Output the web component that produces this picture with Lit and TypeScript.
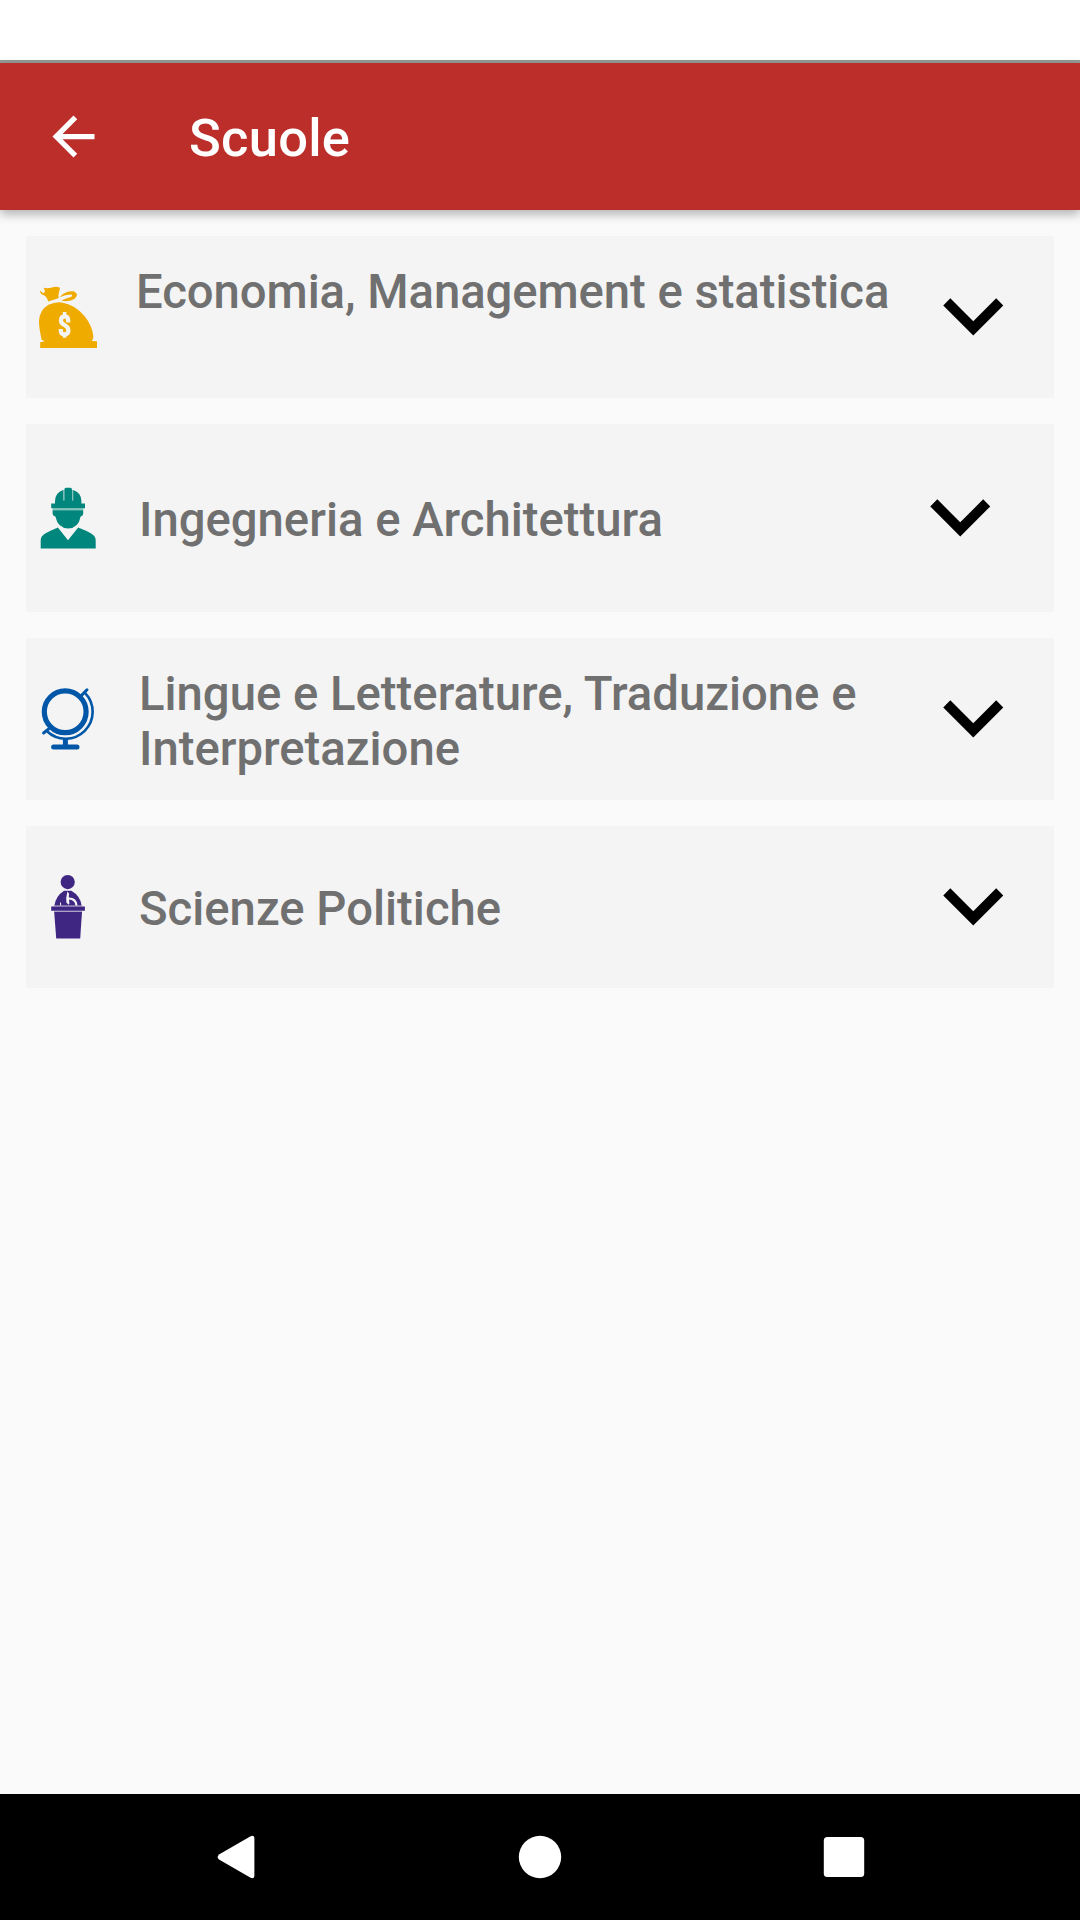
import { LitElement, html, css, svg } from "lit";
import { customElement } from "lit/decorators.js";

const moneyBag = svg`
  <g fill="#f0ab00">
    <path d="M19.7 20.6 L23.4 23.2 L25 21.6 L23.8 17.8 Q28 18.9 32 17.5 Q36 16 40 17.7 L38.4 25.6 Q39 27.6 38.4 28.2 L28.3 31.6 Q26.6 26.2 23.8 25.2 Q20.4 24.6 19.7 20.6Z"/>
    <path d="M39.6 27.2 Q45 20.8 53.5 21.3 Q59.8 24 54.8 28.8 Q49.5 32.4 41.2 30.6 Q46 28.6 51.4 26.8 Q53.6 24.8 50.5 24.6 Q45.5 25 39.6 27.2Z"/>
    <path d="M28.5 34.8 Q35 31.6 42 32.4 Q55 34.6 64.5 46 Q72.5 56 73.4 66.6 Q73.2 69.6 71.8 71 L77 71.2 V78 H20.2 V72.2 L24.8 71.2 L21.6 69.8 Q19 58 19 51 Q19.6 39.8 28.5 34.8Z"/>
  </g>
  <g fill="none" stroke="#f4f4f4">
    <path stroke-width="4.2" d="M48.2 52.4 V50.4 Q48.2 46.4 44.6 46.4 Q41 46.4 41 50.4 Q41 53.4 44.6 55.2 Q48.4 57.2 48.4 60.6 Q48.4 64.4 44.6 64.4 Q40.8 64.4 40.8 60.8 V59"/>
    <path stroke-width="3.6" d="M44.6 42 V46 M44.6 64.6 V67.8"/>
  </g>`;

const engineer = svg`
  <g fill="#00867c">
    <path d="M44.4 19.4 Q44.4 17.7 46 17.7 H50.4 Q52 17.7 52 19.4 V30.6 H53.2 V20 Q61.4 22.8 61.4 31 V33.6 H65 V38.3 H31.2 V33.6 H35 V31 Q35 22.8 43.2 20 V30.6 H44.4Z"/>
    <path d="M32.6 40.2 H63.2 V43.8 Q62.8 46.4 60.6 46.4 Q58.6 58 48.2 58.4 Q37.8 58 35.4 46.4 Q33 46.4 32.6 43.8Z"/>
    <path d="M37.9 57.6 L48 70.2 L58.2 57.6 Q66 60.6 71.2 63.6 Q75.7 66.2 75.7 70.4 V78.5 H20.7 V70.4 Q20.7 66.2 25.2 63.6 Q30.6 60.6 37.9 57.6Z"/>
    <path opacity="0.45" d="M32.6 38.3 H63.4 V40.2 H32.6Z M43.2 20 H44.4 V30.6 H43.2Z M52 20 H53.2 V30.6 H52Z"/>
  </g>`;

const globe = svg`
  <g fill="none" stroke="#0057a8">
    <circle cx="45.2" cy="41.8" r="20.9" stroke-width="5.2"/>
    <path stroke-width="2.6" d="M65.2 23.1 A27.02 27.02 0 0 1 27 61.3"/>
    <path stroke-width="3" stroke-linecap="round" d="M60.6 26.4 L67 19.8 M23.6 63 L29.6 58.2"/>
    <path stroke-width="5" d="M45.4 69 V76"/>
    <path stroke-width="5" stroke-linecap="round" d="M33.6 77.1 H57"/>
  </g>`;

const speaker = svg`
  <g fill="#3f2682">
    <circle cx="47.7" cy="22.1" r="7.1"/>
    <path d="M44 30.8 H51.4 Q60.4 36 61.6 45.6 H34.4 Q35.8 36 44 30.8Z"/>
    <path d="M31.2 46.4 H64.9 V50.8 H31.2Z"/>
    <path d="M34.2 52 H62 L60.2 78.6 H36.2Z"/>
    <path opacity="0.4" d="M33.5 45.5 H62.5 V46.5 H33.5Z M34 50.7 H62 V52.1 H34Z"/>
  </g>
  <g fill="#f4f4f4">
    <path d="M47.4 31.6 L49 33.4 L48.8 37.6 Q56.8 37.4 57.6 45.6 H55.4 Q54.8 40 49 39.6 L49.4 43.4 L48.6 44.8 L46.4 42.6 L46.2 38Z"/>
    <path d="M40 42.6 L41 42.6 L41.2 45.6 H40.2Z"/>
  </g>`;

const schools = [
  { name: "Economia, Management e statistica", icon: moneyBag, kind: "economy" },
  { name: "Ingegneria e Architettura", icon: engineer, kind: "engineering" },
  { name: "Lingue e Letterature, Traduzione e Interpretazione", icon: globe, kind: "languages" },
  { name: "Scienze Politiche", icon: speaker, kind: "politics" },
];

@customElement("app-root")
export class AppRoot extends LitElement {
  static styles = css`
    :host {
      display: flex;
      flex-direction: column;
      height: 1920px;
      background: #fafafa;
      font-family: Roboto, sans-serif;
      font-weight: 500;
    }
    svg { display: block; flex: none; }
    .status { height: 60px; flex: none; background: #fff; border-bottom: 3px solid #969a96; }
    .bar {
      height: 147px;
      flex: none;
      box-sizing: border-box;
      display: flex;
      align-items: center;
      padding-left: 42px;
      gap: 84px;
      background: #bb2e2a;
      color: #fff;
      box-shadow: 0 4px 10px rgba(0, 0, 0, 0.3);
    }
    .title {
      margin: 0;
      padding-top: 3px;
      font-size: 52.5px;
      line-height: 62px;
      font-weight: 500;
      letter-spacing: 0.25px;
    }
    .list { flex: 1; display: flex; flex-direction: column; gap: 26px; padding: 26px; }
    .card {
      display: flex;
      box-sizing: border-box;
      height: 162px;
      padding-right: 51px;
      background: #f4f4f4;
      color: #707070;
    }
    .icon { margin: 44px 0 0 4px; }
    .name { flex: 1; margin: 29px 0 0 29px; font-size: 47.25px; line-height: 55px; }
    .chevron { align-self: center; margin-bottom: 4px; overflow: visible; }
    .economy .name { margin-left: 26px; letter-spacing: -0.06px; }
    .engineering { height: 188px; padding-right: 64px; }
    .engineering .icon { margin-top: 56px; }
    .engineering .name { margin-top: 69px; }
    .languages .icon { margin-top: 42px; }
    .politics .name { margin-top: 56px; }
    .nav {
      height: 126px;
      flex: none;
      display: flex;
      align-items: center;
      justify-content: space-between;
      padding: 0 214px;
      background: #000;
    }
  `;

  render() {
    return html`
      <div class="status"></div>
      <header class="bar">
        <svg width="63" height="63" viewBox="0 0 24 24" fill="#fff">
          <path d="M20 11H7.83l5.59-5.59L12 4l-8 8 8 8 1.41-1.41L7.83 13H20z" />
        </svg>
        <h1 class="title">Scuole</h1>
      </header>
      <main class="list">
        ${schools.map(
          (s) => html`
            <section class="card ${s.kind}">
              <svg class="icon" width="80" height="80" viewBox="10 10 80 80">${s.icon}</svg>
              <div class="name">${s.name}</div>
              <svg class="chevron" width="60" height="40" viewBox="5.95 7.92 12 8">
                <path d="M7.41 8.59L12 13.17l4.59-4.58L18 10l-6 6-6-6z" />
              </svg>
            </section>
          `
        )}
      </main>
      <nav class="nav">
        <svg width="44" height="44" viewBox="0 0 44 44" fill="#fff">
          <path d="M36.2 1.4 Q40.4 -0.8 40.4 4 V40 Q40.4 44.8 36.2 42.6 L5.4 24.8 Q1.8 22 5.4 19.2Z" />
        </svg>
        <svg width="44" height="44" viewBox="0 0 44 44" fill="#fff"><circle cx="22" cy="22" r="21.2" /></svg>
        <svg width="44" height="44" viewBox="0 0 44 44" fill="#fff"><rect x="1.8" y="2" width="40.4" height="40" rx="3.5" /></svg>
      </nav>
    `;
  }
}
